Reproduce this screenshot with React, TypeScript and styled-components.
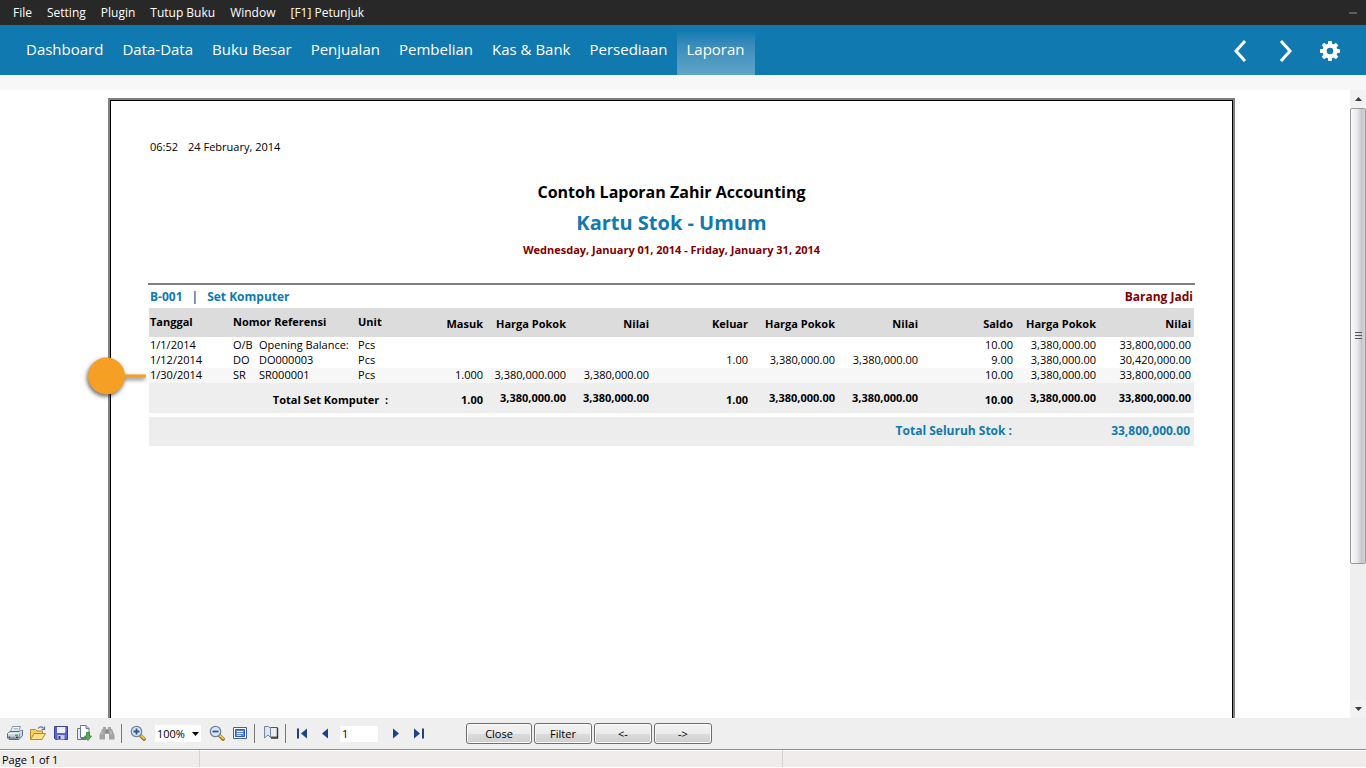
import React from 'react';
import styled, { createGlobalStyle, css } from 'styled-components';

const blue = '#1079b0';
const maroon = '#800000';

const GlobalStyle = createGlobalStyle`
  *, *::before, *::after { box-sizing: border-box; }
  body {
    margin: 0;
    background: #fff;
    color: #000;
    font-family: 'Open Sans', 'Noto Sans', sans-serif;
    font-size: 11px;
  }
  button, input, select { font: inherit; color: inherit; }
`;

const Window = styled.div`
  display: flex;
  flex-direction: column;
  height: 100vh;
  padding-bottom: 1px;
  overflow: hidden;
`;

/* ---- top bars ---- */
const MenuBar = styled.nav`
  display: flex;
  align-items: center;
  flex: none;
  height: 25px;
  padding: 0 9px 0 13px;
  gap: 15px;
  background: #282828;
`;

const MenuItem = styled.button`
  padding: 0;
  border: 0;
  background: none;
  color: #fff;
  font-size: 12px;
  line-height: 16px;
  white-space: nowrap;
`;

const Minimize = styled.button`
  width: 8px;
  height: 2px;
  margin-left: auto;
  padding: 0;
  border: 0;
  background: #5c5c5c;
`;

const NavBar = styled.nav`
  display: flex;
  align-items: stretch;
  flex: none;
  height: 50px;
  padding: 0 26px 0 17px;
  background: ${blue};
`;

const NavLink = styled.a<{ $active?: boolean }>`
  display: flex;
  align-items: center;
  padding: 0 10px 2px 9px;
  color: #fff;
  font-size: 15px;
  line-height: 20px;
  text-decoration: none;
  white-space: nowrap;
  ${(p) => p.$active && css`background: linear-gradient(${blue} 10%, #3a8cbb 40%, #60a5c8);`}
`;

const NavTools = styled.div`
  display: flex;
  align-items: center;
  gap: 22px;
  margin-left: auto;
  padding-top: 2px;
`;

const NavTool = styled.button`
  display: flex;
  padding: 0;
  border: 0;
  background: none;
  color: #fff;
`;

const Strip = styled.div`
  flex: none;
  height: 15px;
  background: #f7f7f7;
`;

/* ---- report viewer ---- */
const Viewer = styled.main`
  display: flex;
  flex: 1;
  min-height: 0;
`;

const Canvas = styled.div`
  flex: 1;
  min-width: 0;
  padding: 8px 115px 0 108px;
  overflow: hidden;
`;

const Sheet = styled.article`
  min-height: 1200px;
  padding: 38px;
  border: 2px solid #808080;
  outline: 1px solid #000;
  outline-offset: -3px;
`;

const Stamp = styled.p`
  display: flex;
  gap: 10px;
  margin: 0 0 23px 2px;
  line-height: 18px;
`;

const ReportHead = styled.header`
  text-align: center;
  font-weight: 700;
`;

const Company = styled.h2`
  margin: 0;
  font-size: 16px;
  line-height: 26px;
`;

const Title = styled.h1`
  margin: 0;
  color: ${blue};
  font-size: 20px;
  line-height: 36px;
`;

const Period = styled.p`
  margin: 0;
  color: ${maroon};
  line-height: 18px;
`;

const GroupHead = styled.div`
  display: flex;
  justify-content: space-between;
  margin-top: 24px;
  padding: 2px 2px 1px;
  border-top: 2px solid #808080;
  color: ${blue};
  font-size: 12px;
  font-weight: 700;
  line-height: 20px;
`;

const GroupName = styled.span`
  display: flex;
  gap: 9px;
`;

const Category = styled.span`
  color: ${maroon};
`;

const StockTable = styled.table`
  width: calc(100% - 2px);
  margin-left: 1px;
  table-layout: fixed;
  border-spacing: 0;
  line-height: 15px;
  white-space: nowrap;
`;

const HeadCell = styled.th<{ $num?: boolean }>`
  height: 30px;
  padding: ${(p) => (p.$num ? '2px 3px 0 0' : '0 0 3px 1px')};
  border-bottom: 1px solid #fff;
  background: #dcdcdc;
  text-align: ${(p) => (p.$num ? 'right' : 'left')};
`;

const Row = styled.tr<{ $marked?: boolean }>`
  background: ${(p) => (p.$marked ? '#f7f7f7' : 'transparent')};
`;

const Cell = styled.td<{ $num?: boolean }>`
  position: relative;
  height: 15px;
  padding: ${(p) => (p.$num ? '0 3px 0 0' : '0 0 0 1px')};
  line-height: 13px;
  text-align: ${(p) => (p.$num ? 'right' : 'left')};
  vertical-align: top;
`;

const Callout = styled.span`
  position: absolute;
  top: 50%;
  left: -61px;
  display: flex;
  align-items: center;
  transform: translateY(-50%);
  filter: drop-shadow(-1px 2px 2px rgba(0, 0, 0, 0.6));
`;

const Dot = styled.span`
  width: 37px;
  height: 37px;
  border-radius: 50%;
  background: #f59f24;
`;

const Pointer = styled.span`
  width: 21px;
  height: 3px;
  background: #f59f24;
`;

const TotalCell = styled.td<{ $low?: boolean; $label?: boolean }>`
  height: 30px;
  padding: ${(p) => (p.$low ? '4px' : '0')} ${(p) => (p.$label ? '12px' : '3px')} 2px 0;
  background: #eee;
  font-weight: 700;
  text-align: right;
`;

const GrandCell = styled.td`
  height: 33px;
  padding: 0 4px 3px 0;
  border-top: 4px solid #fff;
  background: #ededed;
  color: ${blue};
  font-size: 12px;
  font-weight: 700;
  text-align: right;
`;

/* ---- scroll bar ---- */
const ScrollBar = styled.div`
  display: flex;
  flex-direction: column;
  flex: none;
  width: 16px;
  background: #efefef;
`;

const ScrollArrow = styled.button`
  display: flex;
  align-items: center;
  justify-content: center;
  flex: none;
  height: 18px;
  padding: 0;
  border: 0;
  background: #f2f2f2;
`;

const Track = styled.div`
  flex: 1;
`;

const Thumb = styled.div`
  display: flex;
  align-items: center;
  justify-content: center;
  height: 77%;
  border: 1px solid #98989c;
  border-radius: 2px;
  background: linear-gradient(90deg, #fafafa, #e9e9eb 45%, #c6c6cc 75%, #d4d4d9);
`;

/* ---- preview tool bar ---- */
const ToolBar = styled.div`
  display: flex;
  align-items: center;
  flex: none;
  height: 31px;
  padding-left: 3px;
  background: #efefef;
`;

const IconButton = styled.button`
  display: flex;
  align-items: center;
  justify-content: center;
  flex: none;
  width: 23px;
  height: 23px;
  padding: 0 0 2px;
  border: 0;
  background: none;
`;

const Separator = styled.span`
  width: 1px;
  height: 19px;
  margin: 0 4px 0 3px;
  background: #777;
`;

const ZoomBox = styled.span`
  position: relative;
  display: flex;
  align-items: center;
  width: 46px;
  height: 17px;
  margin: 0 4px 0 6px;
  background: #fff;
`;

const ZoomSelect = styled.select`
  width: 100%;
  height: 17px;
  padding: 0 0 0 2px;
  border: 0;
  appearance: none;
  background: transparent;
`;

const DropArrow = styled.svg`
  position: absolute;
  right: 2px;
  pointer-events: none;
`;

const PageInput = styled.input`
  width: 38px;
  height: 16px;
  margin: 0 6px 0 4px;
  padding: 0 2px;
  border: 0;
  background: #fff;
`;

const Actions = styled.div`
  display: flex;
  gap: 2px;
  margin-left: 36px;
`;

const ActionButton = styled.button<{ $wide?: boolean }>`
  width: ${(p) => (p.$wide ? '66px' : '58px')};
  height: 21px;
  padding: 0;
  border: 1px solid #6f6f6f;
  border-radius: 3px;
  box-shadow: inset 0 0 0 1px #f8f8f8;
  background: linear-gradient(#f3f3f3, #ebebeb 50%, #dcdcdc 51%, #cfcfcf);
  line-height: 17px;
`;

const StatusBar = styled.footer`
  display: flex;
  flex: none;
  height: 18px;
  border-top: 1px solid #8a8f8f;
  box-shadow: inset 0 1px #fff;
  background: #f0eceb;
`;

const Pane = styled.span<{ $size: number }>`
  flex: ${(p) => p.$size} 1 0;
  padding: 3px 0 0 2px;
  line-height: 14px;
  white-space: nowrap;

  & + & { border-left: 1px solid #d6d3d2; }
`;

/* ---- icons ---- */
const Chevron = ({ back }: { back?: boolean }) => (
  <svg width="24" height="24" viewBox="0 0 24 24" fill="none" stroke="currentColor" strokeWidth="3">
    <path d={back ? 'M17 2 8 12l9 10' : 'M7 2l9 10-9 10'} />
  </svg>
);

const Gear = () => (
  <svg width="20" height="20" viewBox="0 0 20 20" fill="none" stroke="currentColor">
    <circle cx="10" cy="10" r="5.4" strokeWidth="4.2" />
    {[0, 45, 90, 135, 180, 225, 270, 315].map((a) => (
      <path key={a} d="M8.300 0h3.400l.5 3.600H7.800z" fill="currentColor" stroke="none" transform={`rotate(${a} 10 10)`} />
    ))}
  </svg>
);

const Icon = ({ children }: { children: React.ReactNode }) => (
  <svg width="16" height="16" viewBox="0 0 16 16">{children}</svg>
);

const PrintIcon = () => (
  <Icon>
    <path d="M5.500 1.500h8L11.500 7H3.500z" fill="#fff" stroke="#7d93a8" />
    <path d="M6.500 3.500h5M6 5h5" stroke="#a9bccd" />
    <path d="M.5 8.500 3 6.500h9.500l3-1.500v5.500L12 14.500H2L.5 13z" fill="#c9d4de" stroke="#5a6f83" />
    <path d="M1 8.500h10.500l3-2.500" fill="none" stroke="#f4f8fb" />
    <path d="M1.500 12.500h10" stroke="#34475a" strokeWidth="2" />
    <path d="M3 12h6" stroke="#eef3f7" />
    <path d="M8 10.200h3" stroke="#39b54a" strokeWidth="1.600" />
    <path d="M12.500 8.500v5" stroke="#8499ab" />
  </Icon>
);

const OpenIcon = () => (
  <Icon>
    <path d="M.5 14V4.500h5L7 6h5.500v3" fill="#f6cf68" stroke="#b98a22" />
    <path d="M.5 14.500 4 8.500h11.500L12 14.500z" fill="#fde08a" stroke="#b98a22" />
    <path d="M8 3.500c2-2.500 4.500-2 5.500 0M14.500 1.500v3h-3" fill="none" stroke="#5877a8" strokeWidth="1.200" />
  </Icon>
);

const SaveIcon = () => (
  <Icon>
    <path d="M1.500 1.500h13v13h-12l-1-1z" fill="#5b63d0" stroke="#3a3f9e" />
    <path d="M4 2h8v6H4z" fill="#eef1fd" />
    <path d="M12 2h1v5h-1z" fill="#8d94ea" />
    <path d="M4.500 10h7v4.500h-7z" fill="#c9cdf4" />
    <path d="M5.500 11h2v3h-2z" fill="#33388e" />
  </Icon>
);

const ExportIcon = () => (
  <Icon>
    <path d="M1.500 3.500H5v10h5v1H1.500z" fill="#e6ecf2" stroke="#65788a" />
    <path d="M4.500.5h5.500l3 3v9h-8.500z" fill="#fff" stroke="#65788a" />
    <path d="M10 .5v3h3" fill="none" stroke="#65788a" />
    <path d="M10.500 7.500h3V11h2L12 15.500 8.500 11h2z" fill="#58ab55" stroke="#35783a" strokeWidth=".8" />
  </Icon>
);

const FindIcon = () => (
  <Icon>
    <path d="M3 4h1V2h3v2h2V2h3v2h1l2.500 6v4.500H10V9H6v5.500H.5V10z" fill="#a3a3a3" />
    <path d="M6.500 5h3v3h-3z" fill="#858585" />
    <path d="M3 5.500v4M12 5.500v4" stroke="#c8c8c8" />
  </Icon>
);

const ZoomIcon = ({ plus }: { plus?: boolean }) => (
  <Icon>
    <path d="m10 10 4 4" stroke="#8a6a1e" strokeWidth="3.600" strokeLinecap="round" />
    <path d="m11 10.500 3 3" stroke="#f2c640" strokeWidth="2" strokeLinecap="round" />
    <circle cx="6.500" cy="6.500" r="5.200" fill="#d5e6fa" stroke="#73869c" strokeWidth="1.300" />
    <path d={plus ? 'M3.500 6.500h6M6.500 3.500v6' : 'M3.500 6.500h6'} stroke="#31548f" strokeWidth="1.800" />
  </Icon>
);

const FullPageIcon = () => (
  <Icon>
    <path d="M1.500 2.500h13v11h-13z" fill="#fff" stroke="#3c5eae" />
    <path d="M3.500 4.500h9v7h-9z" fill="#5b8df0" stroke="#2c55bd" />
    <path d="M5 6.500h6M5 8.500h6M5 10.500h4" stroke="#dfe9ff" />
  </Icon>
);

const OutlineIcon = () => (
  <Icon>
    <path d="M7.500 2.500h7v9.500h-7z" fill="#e8edf3" stroke="#4f5a66" />
    <path d="M14.500 3v10H8" fill="none" stroke="#333" strokeWidth="1.400" />
    <path d="M1.500 1.500h4l2 2v9l-2.500-2.500-3.500 3z" fill="#d9e6f5" stroke="#73869c" />
  </Icon>
);

const PageArrow = ({ back, end }: { back?: boolean; end?: boolean }) => (
  <Icon>
    <g fill="#1d4387" transform={back ? 'rotate(180 8 8.500)' : undefined}>
      <path d={end ? 'M3 3.500l6 5-6 5z' : 'M5 3.500l6 5-6 5z'} />
      {end && <path d="M11 3.500h2v10h-2z" />}
    </g>
  </Icon>
);

const Arrow = ({ down }: { down?: boolean }) => (
  <svg width="7" height="4" viewBox="0 0 7 4">
    <path d={down ? 'M0 0h7L3.500 4z' : 'M0 4h7L3.500 0z'} fill="#3c3c3c" />
  </svg>
);

/* ---- data ---- */
const menu = ['File', 'Setting', 'Plugin', 'Tutup Buku', 'Window', '[F1] Petunjuk'];
const modules = ['Dashboard', 'Data-Data', 'Buku Besar', 'Penjualan', 'Pembelian', 'Kas & Bank', 'Persediaan', 'Laporan'];
const columns = [83, 26, 99, 43, 86, 83, 83, 99, 87, 83, 95, 83, 95];
const amountHeads = ['Masuk', 'Harga Pokok', 'Nilai', 'Keluar', 'Harga Pokok', 'Nilai', 'Saldo', 'Harga Pokok', 'Nilai'];

const entries = [
  {
    text: ['1/1/2014', 'O/B', 'Opening Balance:', 'Pcs'],
    amounts: ['', '', '', '', '', '', '10.00', '3,380,000.00', '33,800,000.00'],
  },
  {
    text: ['1/12/2014', 'DO', 'DO000003', 'Pcs'],
    amounts: ['', '', '', '1.00', '3,380,000.00', '3,380,000.00', '9.00', '3,380,000.00', '30,420,000.00'],
  },
  {
    text: ['1/30/2014', 'SR', 'SR000001', 'Pcs'],
    amounts: ['1.000', '3,380,000.000', '3,380,000.00', '', '', '', '10.00', '3,380,000.00', '33,800,000.00'],
    marked: true,
  },
];

const totals = ['1.00', '3,380,000.00', '3,380,000.00', '1.00', '3,380,000.00', '3,380,000.00', '10.00', '3,380,000.00', '33,800,000.00'];

export default function App() {
  return (
    <Window>
      <GlobalStyle />
      <MenuBar>
        {menu.map((m) => <MenuItem key={m}>{m}</MenuItem>)}
        <Minimize aria-label="Minimize" />
      </MenuBar>
      <NavBar>
        {modules.map((m) => (
          <NavLink key={m} href="#" $active={m === 'Laporan'}>{m}</NavLink>
        ))}
        <NavTools>
          <NavTool aria-label="Back"><Chevron back /></NavTool>
          <NavTool aria-label="Forward"><Chevron /></NavTool>
          <NavTool aria-label="Settings"><Gear /></NavTool>
        </NavTools>
      </NavBar>
      <Strip />

      <Viewer>
        <Canvas>
          <Sheet>
            <Stamp><span>06:52</span><span>24 February, 2014</span></Stamp>
            <ReportHead>
              <Company>Contoh Laporan Zahir Accounting</Company>
              <Title>Kartu Stok - Umum</Title>
              <Period>Wednesday, January 01, 2014 - Friday, January 31, 2014</Period>
            </ReportHead>
            <GroupHead>
              <GroupName><span>B-001</span><span>|</span><span>Set Komputer</span></GroupName>
              <Category>Barang Jadi</Category>
            </GroupHead>
            <StockTable>
              <colgroup>
                {columns.map((w, i) => <col key={i} width={w} />)}
              </colgroup>
              <thead>
                <tr>
                  <HeadCell>Tanggal</HeadCell>
                  <HeadCell colSpan={2}>Nomor Referensi</HeadCell>
                  <HeadCell>Unit</HeadCell>
                  {amountHeads.map((h, i) => <HeadCell key={i} $num>{h}</HeadCell>)}
                </tr>
              </thead>
              <tbody>
                {entries.map((e) => (
                  <Row key={e.text[0]} $marked={e.marked}>
                    {e.text.map((t, i) => (
                      <Cell key={i}>
                        {t}
                        {e.marked && i === 0 && <Callout><Dot /><Pointer /></Callout>}
                      </Cell>
                    ))}
                    {e.amounts.map((a, i) => <Cell key={i} $num>{a}</Cell>)}
                  </Row>
                ))}
              </tbody>
              <tfoot>
                <tr>
                  <TotalCell colSpan={4} $low $label>Total Set Komputer &nbsp;:</TotalCell>
                  {totals.map((t, i) => <TotalCell key={i} $low={i % 3 === 0}>{t}</TotalCell>)}
                </tr>
                <tr>
                  <GrandCell colSpan={11}>Total Seluruh Stok :</GrandCell>
                  <GrandCell colSpan={2}>33,800,000.00</GrandCell>
                </tr>
              </tfoot>
            </StockTable>
          </Sheet>
        </Canvas>
        <ScrollBar>
          <ScrollArrow aria-label="Scroll up"><Arrow /></ScrollArrow>
          <Track>
            <Thumb>
              <svg width="7" height="8" viewBox="0 0 7 8"><path d="M0 .5h7M0 3.500h7M0 6.500h7" stroke="#555" /></svg>
            </Thumb>
          </Track>
          <ScrollArrow aria-label="Scroll down"><Arrow down /></ScrollArrow>
        </ScrollBar>
      </Viewer>

      <ToolBar>
        <IconButton aria-label="Print"><PrintIcon /></IconButton>
        <IconButton aria-label="Open"><OpenIcon /></IconButton>
        <IconButton aria-label="Save"><SaveIcon /></IconButton>
        <IconButton aria-label="Export"><ExportIcon /></IconButton>
        <IconButton aria-label="Find"><FindIcon /></IconButton>
        <Separator />
        <IconButton aria-label="Zoom in"><ZoomIcon plus /></IconButton>
        <ZoomBox>
          <ZoomSelect aria-label="Zoom" defaultValue="100%"><option>100%</option></ZoomSelect>
          <DropArrow width="7" height="4" viewBox="0 0 7 4"><path d="M0 0h7L3.500 4z" /></DropArrow>
        </ZoomBox>
        <IconButton aria-label="Zoom out"><ZoomIcon /></IconButton>
        <IconButton aria-label="Full screen"><FullPageIcon /></IconButton>
        <Separator />
        <IconButton aria-label="Outline"><OutlineIcon /></IconButton>
        <Separator />
        <IconButton aria-label="First page"><PageArrow back end /></IconButton>
        <IconButton aria-label="Previous page"><PageArrow back /></IconButton>
        <PageInput aria-label="Page" defaultValue="1" />
        <IconButton aria-label="Next page"><PageArrow /></IconButton>
        <IconButton aria-label="Last page"><PageArrow end /></IconButton>
        <Actions>
          <ActionButton $wide>Close</ActionButton>
          <ActionButton>Filter</ActionButton>
          <ActionButton>&lt;-</ActionButton>
          <ActionButton>-&gt;</ActionButton>
        </Actions>
      </ToolBar>
      <StatusBar>
        <Pane $size={197}>Page 1 of 1</Pane>
        <Pane $size={582}>{''}</Pane>
        <Pane $size={582}>{''}</Pane>
      </StatusBar>
    </Window>
  );
}
